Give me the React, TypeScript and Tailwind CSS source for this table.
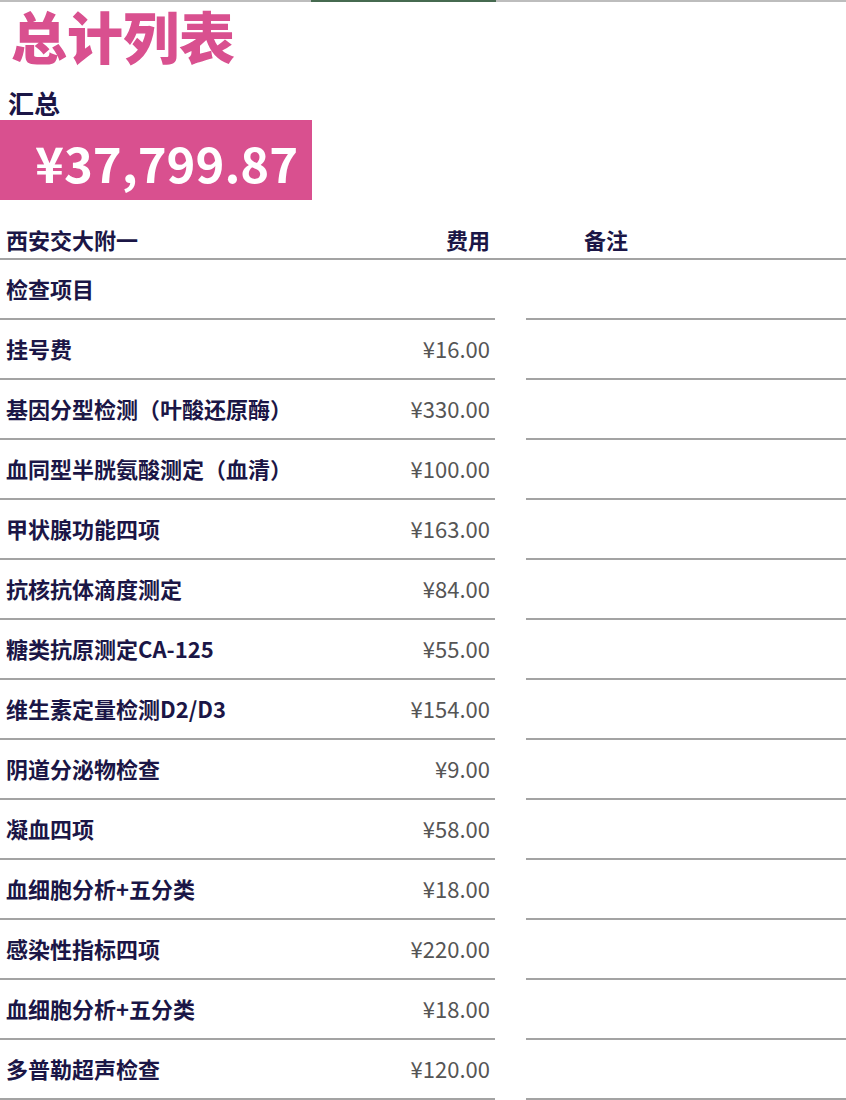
const items: { name: string; price: string }[] = [
  { name: "挂号费", price: "¥16.00" },
  { name: "基因分型检测（叶酸还原酶）", price: "¥330.00" },
  { name: "血同型半胱氨酸测定（血清）", price: "¥100.00" },
  { name: "甲状腺功能四项", price: "¥163.00" },
  { name: "抗核抗体滴度测定", price: "¥84.00" },
  { name: "糖类抗原测定CA-125", price: "¥55.00" },
  { name: "维生素定量检测D2/D3", price: "¥154.00" },
  { name: "阴道分泌物检查", price: "¥9.00" },
  { name: "凝血四项", price: "¥58.00" },
  { name: "血细胞分析+五分类", price: "¥18.00" },
  { name: "感染性指标四项", price: "¥220.00" },
  { name: "血细胞分析+五分类", price: "¥18.00" },
  { name: "多普勒超声检查", price: "¥120.00" },
];

const font = "font-['Noto_Sans_CJK_SC',sans-serif]";

function Row({ name, price }: { name: string; price?: string }) {
  return (
    <div className="flex h-[60px]">
      <div className="flex w-[495px] items-center justify-between border-b-2 border-[#a3a3a3] pb-[2px] pl-[6px] pr-[5px]">
        <span className="text-[22px] font-bold text-[#1b1646]">{name}</span>
        {price ? (
          <span className="text-[22px] text-[#555555]">{price}</span>
        ) : null}
      </div>
      <div className="ml-[31px] flex-1 border-b-2 border-[#a3a3a3]" />
    </div>
  );
}

export default function App() {
  return (
    <div className={`h-[1100px] w-[846px] overflow-hidden bg-white ${font}`}>
      <div className="flex h-[2px]">
        <div className="w-[311px] bg-[#bdbdbd]" />
        <div className="w-[185px] bg-[#466a50]" />
        <div className="flex-1 bg-[#bdbdbd]" />
      </div>

      <h1 className="ml-[11px] mt-[-3px] text-[56px] font-black leading-[72px] text-[#d9508f]">
        总计列表
      </h1>
      <p className="ml-[8px] mt-[14px] text-[26px] font-bold leading-[35px] text-[#1b1646]">
        汇总
      </p>
      <div className="flex h-[80px] w-[312px] items-center bg-[#d9508f] pl-[35px] pt-[2px]">
        <span className="text-[49px] font-bold leading-none text-white">
          ¥37,799.87
        </span>
      </div>

      <div className="flex h-[60px] items-end border-b-2 border-[#a3a3a3] pb-[2px]">
        <div className="flex w-[495px] justify-between pl-[6px] pr-[5px]">
          <span className="text-[22px] font-bold text-[#1b1646]">西安交大附一</span>
          <span className="text-[22px] font-bold text-[#1b1646]">费用</span>
        </div>
        <span className="ml-[89px] text-[22px] font-bold text-[#1b1646]">备注</span>
      </div>

      <Row name="检查项目" />
      {items.map((item, i) => (
        <Row key={i} name={item.name} price={item.price} />
      ))}
    </div>
  );
}
